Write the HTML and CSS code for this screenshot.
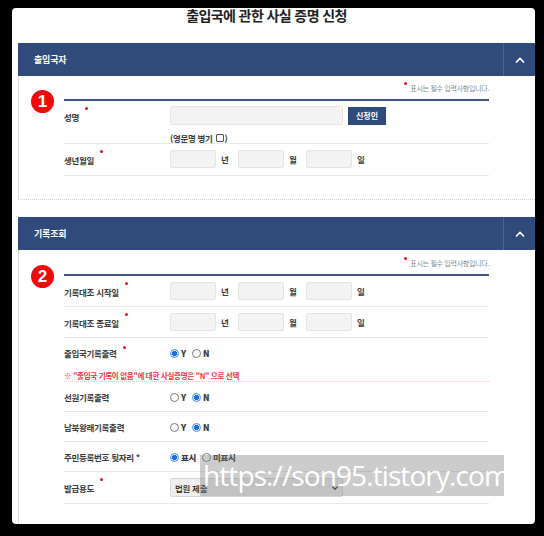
FILE: index.html
```html
<!DOCTYPE html>
<html lang="ko">
<head>
    <meta charset="UTF-8">
    <meta name="viewport" content="width=device-width, initial-scale=1.0">
    <title>출입국에 관한 사실 증명 신청</title>
    <link rel="stylesheet" href="styles.css">
</head>
<body>
    <div class="frame">
        <h1 class="page-title">출입국에 관한 사실 증명 신청</h1>

        <section class="panel">
            <div class="panel-head">
                <h2>출입국자</h2>
                <button class="fold" aria-label="접기">
                    <svg width="10" height="6" viewBox="0 0 10 6"><polyline points="1,5.5 5,1.5 9,5.5" fill="none" stroke="#fff" stroke-width="1.6"/></svg>
                </button>
            </div>
            <div class="panel-body">
                <p class="req-note"><i class="req"></i>표시는 필수 입력사항입니다.</p>
                <div class="form">
                    <span class="step">1</span>
                    <div class="row row-name">
                        <div class="label">성명<i class="req"></i></div>
                        <div class="field">
                            <div class="line">
                                <span class="input wide"></span>
                                <button class="btn">신청인</button>
                            </div>
                            <div class="sub">(영문명 병기 <span class="check"></span>)</div>
                        </div>
                    </div>
                    <div class="row">
                        <div class="label">생년월일<i class="req"></i></div>
                        <div class="field date">
                            <span class="input"></span><span class="unit">년</span>
                            <span class="input"></span><span class="unit">월</span>
                            <span class="input"></span><span class="unit">일</span>
                        </div>
                    </div>
                </div>
            </div>
        </section>

        <section class="panel">
            <div class="panel-head">
                <h2>기록조회</h2>
                <button class="fold" aria-label="접기">
                    <svg width="10" height="6" viewBox="0 0 10 6"><polyline points="1,5.5 5,1.5 9,5.5" fill="none" stroke="#fff" stroke-width="1.6"/></svg>
                </button>
            </div>
            <div class="panel-body">
                <p class="req-note"><i class="req"></i>표시는 필수 입력사항입니다.</p>
                <div class="form">
                    <span class="step">2</span>
                    <div class="row">
                        <div class="label">기록대조 시작일<i class="req"></i></div>
                        <div class="field date">
                            <span class="input"></span><span class="unit">년</span>
                            <span class="input"></span><span class="unit">월</span>
                            <span class="input"></span><span class="unit">일</span>
                        </div>
                    </div>
                    <div class="row">
                        <div class="label">기록대조 종료일<i class="req"></i></div>
                        <div class="field date">
                            <span class="input"></span><span class="unit">년</span>
                            <span class="input"></span><span class="unit">월</span>
                            <span class="input"></span><span class="unit">일</span>
                        </div>
                    </div>
                    <div class="group">
                        <div class="row opt plain">
                            <div class="label">출입국기록출력<i class="req"></i></div>
                            <div class="field">
                                <span class="radio on"></span><b>Y</b>
                                <span class="radio"></span><b>N</b>
                            </div>
                        </div>
                        <p class="warn">※ "출입국 기록이 없음"에 대한 사실증명은 "N" 으로 선택</p>
                    </div>
                    <div class="row opt">
                        <div class="label">선원기록출력</div>
                        <div class="field">
                            <span class="radio"></span><b>Y</b>
                            <span class="radio on"></span><b>N</b>
                        </div>
                    </div>
                    <div class="row opt">
                        <div class="label">남북왕래기록출력</div>
                        <div class="field">
                            <span class="radio"></span><b>Y</b>
                            <span class="radio on"></span><b>N</b>
                        </div>
                    </div>
                    <div class="row opt">
                        <div class="label">주민등록번호 뒷자리 *</div>
                        <div class="field">
                            <span class="radio on"></span><b>표시</b>
                            <span class="radio"></span><b>미표시</b>
                        </div>
                    </div>
                    <div class="row">
                        <div class="label">발급용도<i class="req"></i></div>
                        <div class="field">
                            <div class="select">
                                <span>법원 제출</span>
                                <svg width="6" height="4" viewBox="0 0 6 4"><polyline points="0.5,0.8 3,3.2 5.5,0.8" fill="none" stroke="#222" stroke-width="1.2"/></svg>
                            </div>
                        </div>
                    </div>
                </div>
            </div>
        </section>
    </div>

    <div class="watermark">https://son95.tistory.com</div>
</body>
</html>
```

FILE: styles.css
```css
:root {
    --navy: #2f4a7b;
    --line: #3b5585;
    --text: #3a3a3a;
    --muted: #8a8a8a;
    --border: #e8e8e8;
    --red: #e8141b;
}

* {
    margin: 0;
    padding: 0;
    box-sizing: border-box;
}

body {
    background: #000;
    padding: 8px 9px 12px 12px;
    font-family: "Noto Sans CJK KR", "Noto Sans", sans-serif;
    color: var(--text);
    font-size: 8.5px;
    letter-spacing: -0.3px;
}

.frame {
    height: 516px;
    background: #fff;
    border-radius: 4px;
    overflow: hidden;
}

.page-title {
    margin: -1px 0 20px;
    padding-right: 14px;
    text-align: center;
    font-size: 14px;
    line-height: 16px;
    font-weight: 700;
    color: #222;
    letter-spacing: -0.6px;
}

.panel {
    margin-left: 6px;
}

.panel + .panel {
    margin-top: 17px;
}

.panel-head {
    height: 33px;
    background: var(--navy);
    display: flex;
    align-items: center;
    justify-content: space-between;
    padding-left: 16px;
}

.panel-head h2 {
    color: #fff;
    font-size: 9px;
    font-weight: 700;
    letter-spacing: -0.2px;
}

.fold {
    width: 32px;
    height: 33px;
    background: transparent;
    border: none;
    border-left: 1px solid rgba(255, 255, 255, 0.14);
    display: flex;
    align-items: center;
    justify-content: center;
}

.panel-body {
    border-left: 1px solid #dcdcdc;
    border-bottom: 1px dotted #cfcfcf;
    padding: 0 0 23px 45px;
}

.req-note {
    width: 425px;
    padding-top: 7px;
    margin-bottom: 6px;
    text-align: right;
    font-size: 7px;
    line-height: 10px;
    color: var(--muted);
    display: flex;
    justify-content: flex-end;
    align-items: flex-start;
}

.req-note .req {
    margin: -1px 3px 0 0;
}

.panel + .panel .req-note {
    padding-top: 8px;
}

.req {
    width: 3px;
    height: 3px;
    border-radius: 50%;
    background: var(--red);
    display: block;
    flex-shrink: 0;
}

.form {
    position: relative;
    width: 425px;
    border-top: 2px solid var(--line);
}

.step {
    position: absolute;
    left: -33px;
    top: -11px;
    width: 23px;
    height: 23px;
    border-radius: 50%;
    background: #f00a0a;
    color: #fff;
    font-family: "Liberation Sans", Arial, sans-serif;
    font-size: 17px;
    font-weight: 700;
    line-height: 23px;
    text-align: center;
    letter-spacing: 0;
}

.row {
    display: flex;
    align-items: flex-start;
    padding: 6px 0 5px;
    border-bottom: 1px solid var(--border);
}

.label {
    width: 106px;
    flex-shrink: 0;
    line-height: 18px;
    padding-top: 1px;
    font-weight: 700;
    display: flex;
    align-items: flex-start;
}

.label .req {
    margin: -1px 0 0 6px;
}

.field {
    display: flex;
    align-items: center;
    font-weight: 700;
}

.row-name {
    padding: 5px 0 0;
}

.row-name .label {
    line-height: 19px;
    padding-top: 2px;
}

.row-name .field {
    display: block;
}

.line {
    display: flex;
    align-items: center;
}

.sub {
    margin-top: 8px;
    line-height: 10px;
    display: flex;
    align-items: center;
}

.check {
    width: 8px;
    height: 8px;
    border: 1px solid #555;
    border-radius: 1px;
    margin: 0 1px 0 3px;
}

.input {
    width: 46px;
    height: 18px;
    background: #f3f3f3;
    border: 1px solid #e3e3e3;
    border-radius: 2px;
}

.input.wide {
    width: 173px;
    height: 19px;
}

.btn {
    margin-left: 5px;
    width: 38px;
    height: 18px;
    background: var(--navy);
    color: #fff;
    border: none;
    font-family: inherit;
    font-size: 8px;
    font-weight: 700;
}

.unit {
    width: 10px;
    margin: 0 7px 0 5px;
}

.opt {
    padding: 7px 0 8px;
}

.opt .label {
    line-height: 12px;
    padding-top: 2px;
}

.opt .field {
    height: 12px;
    margin-top: 2px;
}

.opt .field b + .radio {
    margin-left: 6px;
}

.radio {
    width: 9px;
    height: 9px;
    border: 1px solid #7a7a7a;
    border-radius: 50%;
    background: #fff;
    margin-right: 2px;
}

.radio.on {
    border-color: #4f8ee8;
    background: radial-gradient(circle, #1a6fe0 0 2.3px, #dbe8fb 2.8px);
}

.group {
    border-bottom: 1px dotted #f1c9cc;
}

.plain {
    border-bottom: none;
    padding-bottom: 0;
}

.warn {
    margin-top: 12px;
    line-height: 10px;
    font-size: 7.5px;
    font-weight: 700;
    color: #f2333c;
}

.row:last-child {
    padding-bottom: 6px;
}

.select {
    width: 173px;
    height: 19px;
    background: #efefef;
    border: 1px solid #d6d6d6;
    border-radius: 2px;
    display: flex;
    align-items: center;
    justify-content: space-between;
    padding: 0 4px 0 4px;
    font-weight: 500;
    color: #222;
}

.watermark {
    position: absolute;
    left: 200px;
    top: 455px;
    width: 304px;
    height: 41px;
    background: rgba(128, 128, 128, 0.4);
    color: #fff;
    font-family: "Open Sans", "Noto Sans", sans-serif;
    font-size: 28px;
    line-height: 41px;
    letter-spacing: -0.9px;
    padding-left: 3px;
    white-space: nowrap;
}
```
